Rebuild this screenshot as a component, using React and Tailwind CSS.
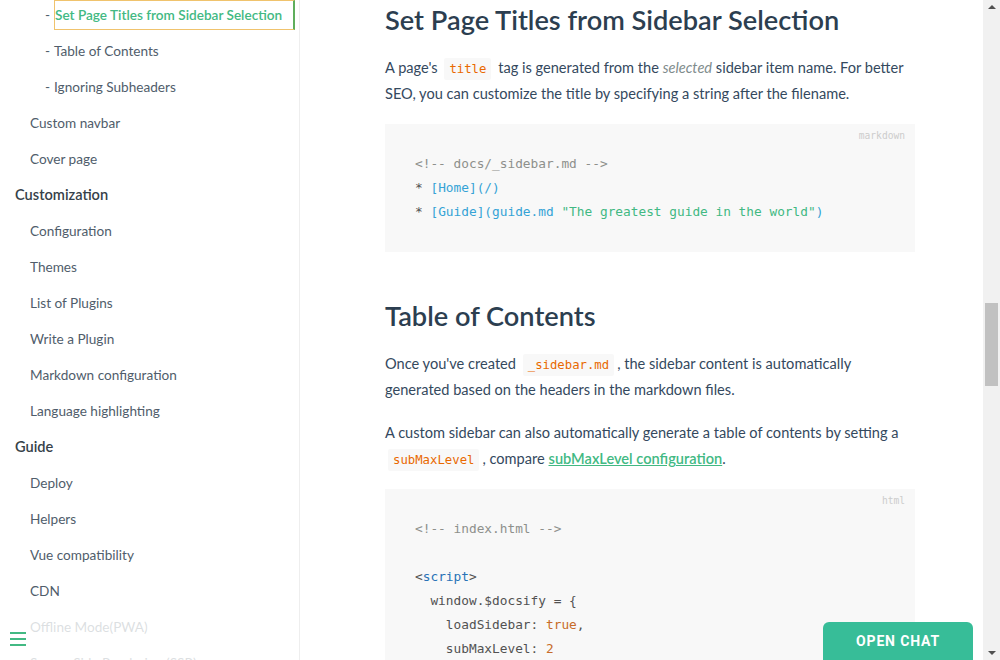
const sans = { fontFamily: 'Lato, "Noto Sans", sans-serif' };
const mono = { fontFamily: '"DejaVu Sans Mono", "Liberation Mono", monospace' };

const sidebar = [
  { t: 'Set Page Titles from Sidebar Selection', sub: true, active: true },
  { t: 'Table of Contents', sub: true },
  { t: 'Ignoring Subheaders', sub: true },
  { t: 'Custom navbar' },
  { t: 'Cover page' },
  { t: 'Customization', head: true },
  { t: 'Configuration' },
  { t: 'Themes' },
  { t: 'List of Plugins' },
  { t: 'Write a Plugin' },
  { t: 'Markdown configuration' },
  { t: 'Language highlighting' },
  { t: 'Guide', head: true },
  { t: 'Deploy' },
  { t: 'Helpers' },
  { t: 'Vue compatibility' },
  { t: 'CDN' },
  { t: 'Offline Mode(PWA)' },
  { t: 'Server-Side Rendering (SSR)' },
];

function Code({ children }) {
  return (
    <code
      className="mx-[3px] rounded-[2px] bg-[#f8f8f8] px-[5px] py-[4px] text-[12.3px] leading-[1] text-[#e96900]"
      style={mono}
    >
      {children}
    </code>
  );
}

function Block({ lang, children }) {
  return (
    <div className="relative bg-[#f8f8f8] px-[30px] py-[28px] text-[12.8px] leading-[24px] text-[#525252]" style={mono}>
      <span className="absolute right-[10px] top-[5px] text-[9.6px] leading-[14px] text-[#ccc]">{lang}</span>
      {children}
    </div>
  );
}

export default function App() {
  return (
    <div className="relative flex h-[660px] w-[1000px] overflow-hidden bg-white" style={sans}>
      {/* sidebar */}
      <aside className="w-[300px] shrink-0 border-r border-[#eee]">
        <ul className="-mt-[3px]">
          {sidebar.map((it) => (
            <li key={it.t} className="flex h-9 items-center text-[13.6px] text-[#505d6b]">
              {it.head ? (
                <span className="pl-[15px] text-[14.6px] font-semibold text-[#364149]">{it.t}</span>
              ) : it.sub ? (
                <div className="flex items-center pl-[45px]">
                  <span className="w-[9px]">-</span>
                  {it.active ? (
                    <span className="flex h-[30px] w-[241px] items-center border border-r-2 border-[#f0c36d] border-r-[#5fae5c] font-semibold text-[#42b983]">
                      {it.t}
                    </span>
                  ) : (
                    <span>{it.t}</span>
                  )}
                </div>
              ) : (
                <span className="pl-[30px]">{it.t}</span>
              )}
            </li>
          ))}
        </ul>
      </aside>

      {/* sidebar toggle */}
      <div className="absolute bottom-0 left-0 flex h-[50px] w-[290px] items-start bg-white/80 pl-[10px] pt-[22px]">
        <div className="flex w-4 flex-col gap-[4px]">
          <span className="h-[2px] bg-[#42b983]" />
          <span className="h-[2px] bg-[#42b983]" />
          <span className="h-[2px] bg-[#42b983]" />
        </div>
      </div>

      {/* main */}
      <main className="flex-1 pl-[85px] pt-[2px] text-[14.6px] text-[#34495e]">
        <div className="w-[530px]">
          <h2 className="text-[27.2px] font-semibold leading-[36px] text-[#2c3e50]">
            Set Page Titles from Sidebar Selection
          </h2>
          <p className="mt-[17px] leading-[26px]">
            A page's <Code>title</Code> tag is generated from the <em className="text-[#7f8c8d]">selected</em> sidebar item name. For better SEO, you can customize the title by specifying a string after the filename.
          </p>
          <div className="mt-[17px]">
            <Block lang="markdown">
              <div className="text-[#8e908c]">&lt;!-- docs/_sidebar.md --&gt;</div>
              <div>
                <span className="text-[#525252]">* </span>
                <span className="text-[#35a3d6]">[Home](/)</span>
              </div>
              <div>
                <span className="text-[#525252]">* </span>
                <span className="text-[#35a3d6]">[Guide](guide.md </span>
                <span className="text-[#42b983]">"The greatest guide in the world"</span>
                <span className="text-[#35a3d6]">)</span>
              </div>
            </Block>
          </div>
          <h2 className="mt-[46px] text-[27.2px] font-semibold leading-[36px] text-[#2c3e50]">Table of Contents</h2>
          <p className="mt-[17px] leading-[26px]">
            Once you've created <Code>_sidebar.md</Code>, the sidebar content is automatically generated based on the headers in the markdown files.
          </p>
          <p className="mt-[17px] leading-[26px]">
            A custom sidebar can also automatically generate a table of contents by setting a <Code>subMaxLevel</Code>, compare{' '}
            <a className="font-semibold text-[#42b983] underline">subMaxLevel configuration</a>.
          </p>
          <div className="mt-[17px]">
            <Block lang="html">
              <div className="text-[#8e908c]">&lt;!-- index.html --&gt;</div>
              <div>&nbsp;</div>
              <div>
                &lt;<span className="text-[#2973b7]">script</span>&gt;
              </div>
              <div className="whitespace-pre">  window.$docsify = {'{'}</div>
              <div className="whitespace-pre">
                {'    loadSidebar: '}
                <span className="text-[#c76b29]">true</span>,
              </div>
              <div className="whitespace-pre">
                {'    subMaxLevel: '}
                <span className="text-[#c76b29]">2</span>
              </div>
              <div className="whitespace-pre">  {'}'}</div>
            </Block>
          </div>
        </div>
      </main>

      {/* scrollbar */}
      <div className="relative w-[17px] shrink-0 bg-[#f1f1f1]">
        <div className="absolute left-1/2 top-[5px] h-0 w-0 -translate-x-1/2 border-x-[4px] border-b-[4px] border-x-transparent border-b-[#505050]" />
        <div className="absolute left-[2px] top-[303px] h-[83px] w-[13px] bg-[#c1c1c1]" />
        <div className="absolute bottom-[5px] left-1/2 h-0 w-0 -translate-x-1/2 border-x-[4px] border-t-[4px] border-x-transparent border-t-[#505050]" />
      </div>

      {/* chat */}
      <button
        className="absolute bottom-[-10px] left-[823px] h-[48px] w-[150px] rounded-t-[6px] bg-[#37bd98] pb-[10px] text-[14px] font-bold tracking-[0.06em] text-white"
        style={{ fontFamily: 'Roboto, sans-serif' }}
      >
        OPEN CHAT
      </button>
    </div>
  );
}
